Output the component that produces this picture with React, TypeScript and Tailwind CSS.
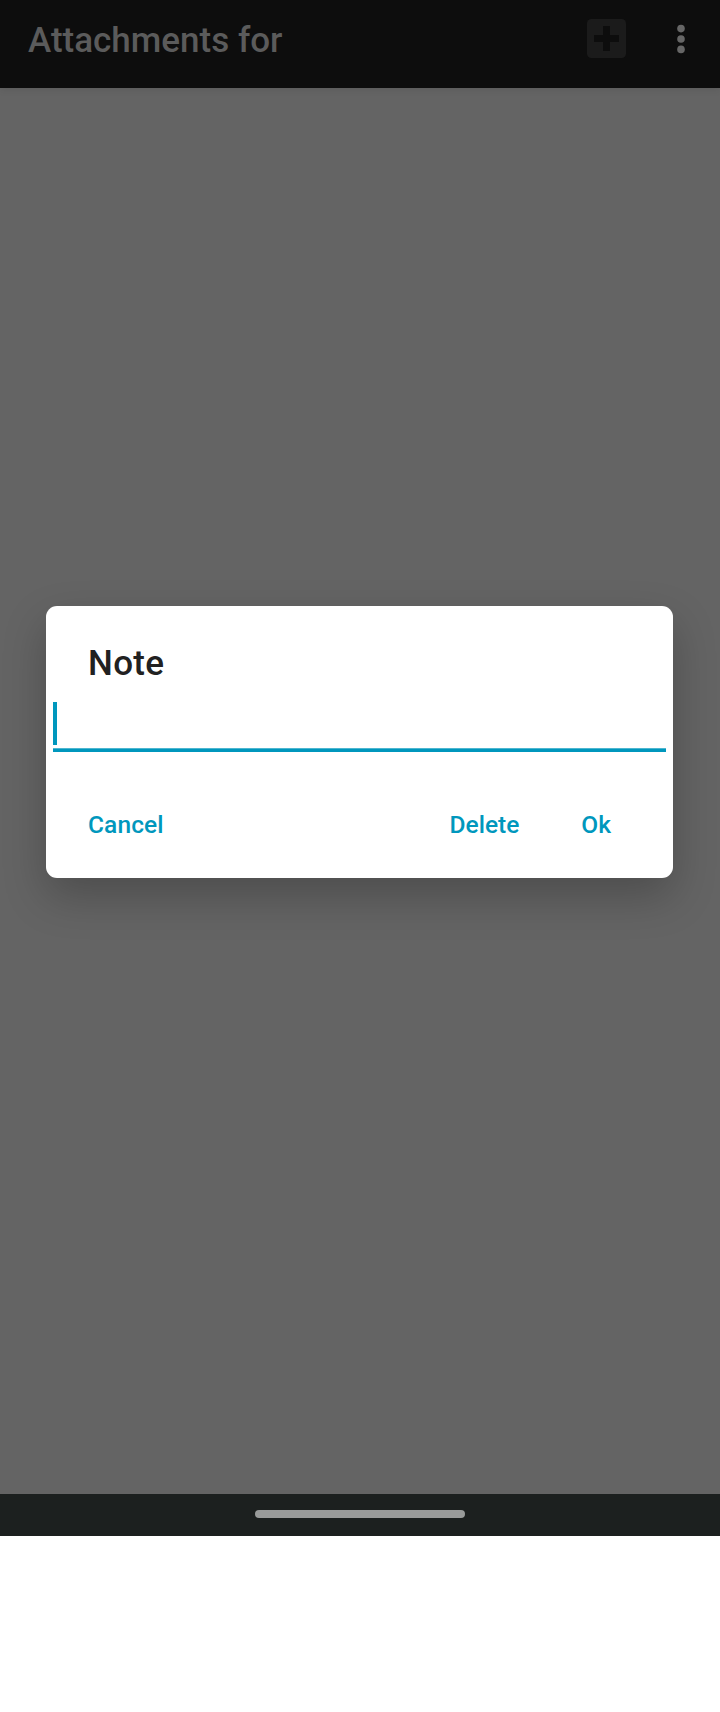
export default function App() {
  return (
    <div className="flex h-[1712px] w-[720px] flex-col bg-white font-['Roboto',sans-serif]">
      <header className="z-10 flex h-[88px] shrink-0 items-start bg-[#0d0d0d] pl-7 text-[#5b5b5b] shadow-[0_1px_8px_rgba(0,0,0,0.1)]">
        <h1 className="flex-1 pt-[19px] text-[35px] leading-[44px] font-medium">Attachments for</h1>
        <svg width="39" height="39" viewBox="0 0 39 39" className="mt-[19px] mr-[50px]">
          <rect width="39" height="39" rx="4.5" fill="#1b1b1b" />
          <path d="M16 7h7v9h9v7h-9v9h-7v-9H7v-7h9z" fill="#0d0d0d" />
        </svg>
        <svg width="10" height="32" viewBox="0 0 10 32" className="mt-[23px] mr-[34px]" fill="#666666">
          <circle cx="5" cy="5.600" r="3.800" />
          <circle cx="5" cy="16" r="3.800" />
          <circle cx="5" cy="26.400" r="3.800" />
        </svg>
      </header>
      <main className="h-[1406px] shrink-0 bg-[#646464] pt-[518px] pr-[47px] pl-[46px]">
        <section className="flex h-[272px] flex-col rounded-[11px] bg-white shadow-[0_18px_44px_rgba(0,0,0,0.23)]">
          <h2 className="pt-[35px] pl-[42px] text-[35px] leading-[46px] font-medium tracking-[0.3px] text-[#212121]">Note</h2>
          <div className="mx-[7px] mt-[15px] h-[50px] border-b-3 border-[#0097bd]">
            <div className="flex h-[47px] items-start border-b border-[#4db6d0]">
              <div className="h-[43px] w-1 bg-[#0097bd]" />
            </div>
          </div>
          <div className="flex pt-[57px] pl-[42px] text-[24.5px] leading-8 font-medium text-[#0097bd]">
            <button className="mr-auto tracking-[0.1px]">Cancel</button>
            <button>Delete</button>
            <button className="mr-[62px] ml-[62px]">Ok</button>
          </div>
        </section>
      </main>
      <footer className="flex h-[42px] shrink-0 items-start justify-center bg-[#1c201f] pt-4">
        <div className="h-2 w-[210px] rounded-full bg-[#999b9a]" />
      </footer>
    </div>
  );
}
